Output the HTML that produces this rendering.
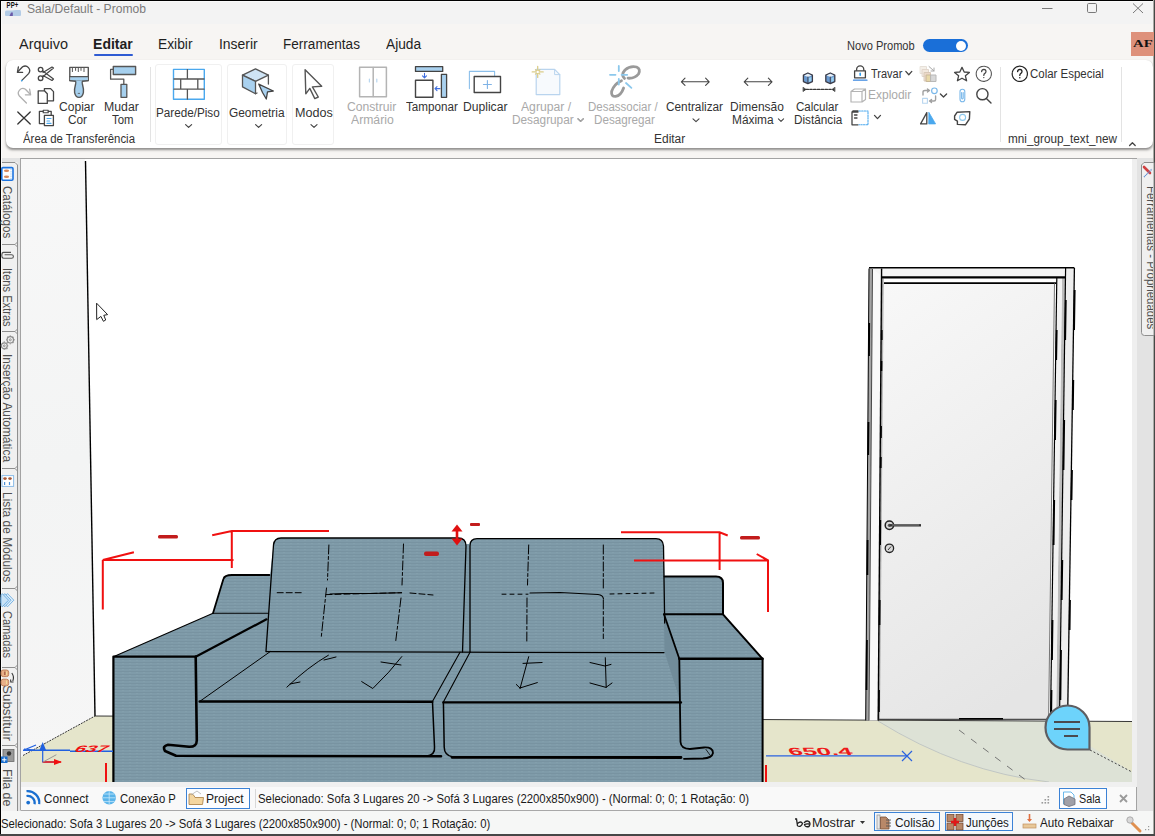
<!DOCTYPE html>
<html><head><meta charset="utf-8"><style>
html,body{margin:0;padding:0;}
body{width:1155px;height:836px;position:relative;overflow:hidden;background:#f3f3f3;font-family:"Liberation Sans",sans-serif;}
.a{position:absolute;}
.t{position:absolute;white-space:nowrap;transform-origin:0 0;}
svg{position:absolute;overflow:visible;}
</style></head><body>
<div class="a" style="left:0;top:0;width:1155px;height:24px;background:#f3f3f3"></div>
<div class="a" style="left:0;top:24px;width:1155px;height:134px;background:#f7f5f3"></div>
<div class="a" style="left:6px;top:60px;width:1146.5px;height:88px;background:#fff;border-radius:7px;box-shadow:0 2px 2.5px -0.5px rgba(0,0,0,.42), 0 0 0.8px rgba(0,0,0,.12)"></div>
<div class="a" style="left:0;top:158px;width:1155px;height:653px;background:#e3e3e3"></div>
<div class="a" style="left:20px;top:158px;width:1117px;height:652px;background:#f0f0f0;border:1px solid #a3a3a3;box-sizing:border-box"></div>
<div class="a" style="left:21px;top:787px;width:1115px;height:23px;background:#f9f9f9"></div>
<div class="a" style="left:0;top:811px;width:1155px;height:25px;background:#f6f7f6"></div>
<div class="a" style="left:0;top:0;width:1155px;height:1px;background:#000"></div>
<div class="a" style="left:0;top:1px;width:1155px;height:1px;background:#fafafa"></div>
<div class="a" style="left:0;top:0;width:1px;height:836px;background:#000"></div>
<div class="a" style="left:1153px;top:0;width:1px;height:836px;background:#aaaaa6"></div>
<div class="a" style="left:1154px;top:0;width:1px;height:836px;background:#464846"></div>
<div class="a" style="left:0;top:834px;width:1155px;height:2px;background:#474747"></div>
<!-- menu underline -->
<div class="a" style="left:94px;top:54px;width:39px;height:2px;background:#2f5bd3;border-radius:1px"></div>
<!-- toggle -->
<div class="a" style="left:923px;top:39px;width:45px;height:13px;background:#1a6fd8;border-radius:7px"></div>
<div class="a" style="left:956px;top:41px;width:10px;height:10px;background:#fff;border-radius:5px"></div>
<!-- AF -->
<div class="a" style="left:1131px;top:32px;width:23px;height:24px;background:#de917b"></div>
<!-- ribbon separators -->
<div class="a" style="left:150px;top:67px;width:1px;height:75px;background:#e3e3e3"></div>
<div class="a" style="left:1000px;top:67px;width:1px;height:75px;background:#e3e3e3"></div>
<div class="a" style="left:1121px;top:67px;width:1px;height:75px;background:#e3e3e3"></div>
<!-- ribbon boxes -->
<div class="a" style="left:155px;top:64px;width:67px;height:81px;border:1px solid #f0f0f0;border-radius:3px;box-sizing:border-box"></div>
<div class="a" style="left:227px;top:64px;width:60px;height:81px;border:1px solid #f0f0f0;border-radius:3px;box-sizing:border-box"></div>
<div class="a" style="left:292px;top:64px;width:42px;height:81px;border:1px solid #f0f0f0;border-radius:3px;box-sizing:border-box"></div>
<!-- bottom tab bar -->
<div class="a" style="left:186px;top:788px;width:64px;height:21px;border:1px solid #3b82d6;box-sizing:border-box;background:#fcfdff"></div>
<div class="a" style="left:255px;top:789px;width:1px;height:19px;background:#d8d8d8"></div>
<div class="a" style="left:1059px;top:788px;width:48px;height:21px;border:1px solid #3b82d6;box-sizing:border-box;background:#fcfdff"></div>
<div class="a" style="left:874px;top:812px;width:66px;height:19px;border:1px solid #3b82d6;box-sizing:border-box;background:#f4f8fd"></div>
<div class="a" style="left:945px;top:812px;width:68px;height:19px;border:1px solid #3b82d6;box-sizing:border-box;background:#f4f8fd"></div>
<svg style="left:0;top:0" width="1155" height="836" viewBox="0 0 1155 836">
<rect x="1" y="162" width="16.5" height="649" fill="#f0f0f0"/>
<g fill="none" stroke="#8e8e8e" stroke-width="1">
<path d="M1,162.5 L15,162.5 L17.5,165 L17.5,811"/>
<path d="M1,244.5 L15,244.5 L17.5,242 M15,244.5 L17.5,247"/>
<path d="M1,331.5 L15,331.5 L17.5,329 M15,331.5 L17.5,334"/>
<path d="M1,468.5 L15,468.5 L17.5,466 M15,468.5 L17.5,471"/>
<path d="M1,588.5 L15,588.5 L17.5,586 M15,588.5 L17.5,591"/>
<path d="M1,667.5 L15,667.5 L17.5,665 M15,667.5 L17.5,670"/>
<path d="M1,745.5 L15,745.5 L17.5,743 M15,745.5 L17.5,748"/>
</g>
<path d="M1154,162.5 L1144,162.5 L1141.5,165 L1141.5,332.5 Q1141.5,335.5 1144.5,335.5 L1154,335.5 Z" fill="#f0f0f0" stroke="#8e8e8e" stroke-width="1"/>
<rect x="1132" y="159" width="5" height="628" fill="#efefef"/>
<path d="M20.5,810.5 L1137.5,810.5" stroke="#a8a8a8" stroke-width="1"/>
</svg>
<div class="a" style="left:1px;top:1px;width:1px;height:833px;background:#fbfbfb"></div>

<svg style="left:0;top:0" width="1155" height="836" viewBox="0 0 1155 836">
<defs>
<clipPath id="vp"><rect x="21" y="159" width="1111" height="623"/></clipPath>
<linearGradient id="lw" gradientUnits="userSpaceOnUse" x1="21" y1="159" x2="120" y2="760"><stop offset="0" stop-color="#f8f8f8"/><stop offset="0.5" stop-color="#f3f4f4"/><stop offset="1" stop-color="#f6f6f6"/></linearGradient>
<linearGradient id="dr" gradientUnits="userSpaceOnUse" x1="880" y1="283" x2="1120" y2="620"><stop offset="0" stop-color="#f8f8f8"/><stop offset="1" stop-color="#e5e5e5"/></linearGradient>
<pattern id="fab" patternUnits="userSpaceOnUse" width="7" height="3"><rect width="7" height="3" fill="#7f9ba9"/><rect y="2" width="7" height="1" fill="#7893a1"/><rect x="3" y="0" width="2" height="1" fill="#839fac"/></pattern>
</defs>
<g clip-path="url(#vp)">
<rect x="21" y="159" width="1111" height="623" fill="#fff"/>
<polygon points="21,159 85,159 95,716 21,757" fill="url(#lw)"/>
<polygon points="21,757 95,716 1132,721.5 1132,782 21,782" fill="#e5e5cb"/>
<path d="M878,721 L1050,721 L1132,772 L1132,782 L1049,782 Q960,772 878,721 Z" fill="#dde2d6"/>
<path d="M878,721 Q960,772 1049,782" fill="none" stroke="#b9bfc0" stroke-width="0.8"/>
<path d="M959,730 L1027,781" fill="none" stroke="#6a6a6a" stroke-width="0.9" stroke-dasharray="7,8"/>
<path d="M1090,750 L1132,772" fill="none" stroke="#444" stroke-width="1" stroke-dasharray="2,2"/>
<!-- wall lines -->
<path d="M85.5,161 L95,716" stroke="#000" stroke-width="1.4" fill="none"/>
<path d="M95,716 L1132,721.5" stroke="#222" stroke-width="0.9" fill="none"/>
<path d="M23,755.5 L95,716" stroke="#333" stroke-width="1" stroke-dasharray="2,1" fill="none"/>
<!-- door -->
<polygon points="884,283 1055,283 1048.6,719 879,719" fill="url(#dr)"/>
<polygon points="869,268.5 872.5,268.5 869,720.4 865.7,720.4" fill="#a4a4a4"/>
<polygon points="872.5,268.5 881.3,268.5 878,720.4 869,720.4" fill="#f9f9f9"/>
<polygon points="881.3,276 1065.6,276 1065.6,268.5 872.5,268.5" fill="#f4f4f4"/>
<polygon points="1065.6,268.5 1074.4,268.5 1067.6,720.4 1059.5,720.4" fill="#eeeeee"/>
<polygon points="1062,278 1065.2,278 1059,720 1056,720" fill="#bcbcbc"/>
<polygon points="1057,278 1062,278 1056,720 1050.5,720" fill="#f2f2f2"/>
<polygon points="881.5,278.5 883.8,278.5 880,719 878,719" fill="#b0b0b0"/>
<g fill="none" stroke="#000">
<path d="M869,267.8 L1074.4,267.8" stroke-width="1.6"/>
<path d="M869,268.5 L865.7,720.4" stroke-width="1"/>
<path d="M872.5,269 L869,720.4" stroke-width="0.9" stroke="#333"/>
<path d="M881.6,268.5 L878.2,720.4" stroke-width="1.4"/>
<path d="M881.5,277.4 L1065.6,277.4" stroke-width="2.4"/>
<path d="M884,283.2 L1056.5,283.2" stroke-width="1.8"/>
<path d="M1074.4,268 L1067.6,720.4" stroke-width="1.3"/>
<path d="M1065.6,268 L1059.5,720.4" stroke-width="1.2"/>
<path d="M1056.8,277.5 L1050.5,720.4" stroke-width="1.2"/>
<path d="M1054.5,283 L1048.6,719" stroke-width="0.8" stroke="#555"/>
<path d="M879,719.3 L1050,719.3" stroke-width="1" stroke="#222"/>
<path d="M959,718.8 L1003,718.8" stroke-width="1.5"/>
<path d="M869.2,323 L869.0,356 M868.5,422 L868.2,455 M867.6,540 L867.4,575 M866.9,640 L866.5,690 M881.7,330 L881.7,340 M881.5,361 L881.4,371 M881.0,426 L880.9,438 M880.8,457 L880.7,468 M880.3,520 L880.1,545 M879.7,600 L879.5,625 M879.0,690 L878.9,712 M1065.8,300 L1065.2,340 M1064.2,420 L1063.5,470 M1062.3,560 L1061.7,600 M1061.0,650 L1060.4,700 M1056.7,330 L1056.2,360 M1055.7,400 L1055.1,440 M1054.2,500 L1053.6,545 M1052.5,620 L1052.0,660 M1051.5,690 L1051.2,715 M1074.7,290 L1074.1,330 M1073.3,380 L1072.9,410 M1072.0,470 L1071.5,500 M1070.0,600 L1069.6,630" stroke-width="1.8"/>
</g>
<circle cx="889.4" cy="525.3" r="4.2" fill="#d8d8d8" stroke="#222" stroke-width="1.5"/>
<circle cx="889.4" cy="525.3" r="1.6" fill="#555"/>
<path d="M889.5,525.3 L921,525.3" stroke="#333" stroke-width="2.4"/>
<path d="M892,525 L919,525" stroke="#aaa" stroke-width="0.7"/>
<circle cx="889.4" cy="548.3" r="4.2" fill="#d8d8d8" stroke="#222" stroke-width="1.3"/>
<path d="M888,550 L891,546.5" stroke="#333" stroke-width="1"/>
<!-- sofa body -->
<path d="M113.4,782 L113.4,656.7 L213,613.2 L223.4,579 Q224.5,575 232,575 L270,575 L273.5,545 Q274.3,538 281,538 L458,538 Q465,538 466,544 L469,544 Q470,538.7 477,538.7 L656,538.7 Q663,538.7 663.5,546 L664.5,576.5 L716,576.5 Q723,576.5 723,583 L723,614.3 L762.6,658.8 L762.6,782 Z" fill="url(#fab)"/>
<polygon points="664,614.3 679.3,658.8 680.5,702 664.5,652" fill="#718c9a"/>
<g fill="none" stroke="#000" stroke-linecap="round" stroke-linejoin="round">
<path d="M113.4,782 L113.4,656.7 L195.7,656.7" stroke-width="2.2"/>
<path d="M195.7,656.7 L196.8,740 Q197,747 189,746.7 L168,744.7 Q162,746 165,751 L176,755.8 L441,756.3" stroke-width="2.6"/>
<path d="M113.4,656.7 L213,613.2 L268,613.2" stroke-width="1.1"/>
<path d="M195.7,656.7 L266.5,619.3" stroke-width="2.2"/>
<path d="M213,613.2 L223.4,579 Q224.5,575 232,575 L269.4,575" stroke-width="1.8"/>
<path d="M266,651 L273.5,545 Q274.3,538 281,538 L458,538 Q466,538 466,546 L462.5,652" stroke-width="1.3"/>
<path d="M266,651.6 L460,652.2 L664,652.6" stroke-width="1.2"/>
<path d="M470,652 L470,546 Q470,538.7 477,538.7 L656,538.7 Q663,538.7 663.5,546 L664.7,623" stroke-width="1.3"/>
<path d="M664.5,576.5 L716,576.5 Q723,576.5 723,583 L723,614.3" stroke-width="2"/>
<path d="M664,614.3 L723,614.3 L762.6,658.8 L762.6,782" stroke-width="2"/>
<path d="M679.3,658.8 L762.6,658.8" stroke-width="2.4"/>
<path d="M664,614.3 L679.3,658.8 L680.5,742 Q681,749 690,749 L704,747.5 Q713,747 713,753 Q712,758 703,758.5 L684,758.8" stroke-width="1.8"/>
<path d="M706,749.5 L710,755" stroke-width="0.8"/>
<path d="M199.6,701.5 L432.3,701.8" stroke-width="2.4"/>
<path d="M199.6,701.5 L270.2,651.6" stroke-width="1"/>
<path d="M432.3,701.8 L460,652.2 M443.4,702 L470,652.2" stroke-width="1.1"/>
<path d="M432.5,702 L434.5,747 Q435.5,755 426,756.3 M443.4,702 L444.2,747 Q444.2,755.5 453,757" stroke-width="1.5"/>
<path d="M443.4,702.4 L681,702.4" stroke-width="2.4"/>
<path d="M452,757.3 L681,757.5" stroke-width="2.8"/>
<!-- tufting -->
<path d="M328.9,545 L327.5,580 M326.5,588 L321.2,637.7 M403.5,544 L402,585 M401,598 L395.8,640.5" stroke-width="1" stroke-dasharray="9,2.5,3,2.5"/>
<path d="M277.2,592.7 L304,592.7 M326,594.6 L401.6,592.7 M410,593 L433,595" stroke-width="1" stroke-dasharray="6,3"/>
<path d="M330,594 L345,593.5 L370,593.5 L401.6,592.7" stroke-width="1.1"/>
<path d="M528.7,545 L527.5,585 M527,598 L526.8,641.4 M603.3,545 L603.3,590 M603.3,600 L603.3,638.6" stroke-width="1" stroke-dasharray="9,2.5,3,2.5"/>
<path d="M502,594.2 L528,594.2 M610,594 L655,593" stroke-width="1" stroke-dasharray="4,4"/>
<path d="M530,593 L560,592.5 L598,594.5 Q603,595 603.5,599" stroke-width="1.1"/>
<path d="M286.9,687.1 Q308,667 328.4,655.2 M324,660 L336,657 M290,684 L300,682 M361.7,681.6 L372.8,688.5 Q390,672 401.8,656.6 M381,662 L401,665" stroke-width="1"/>
<path d="M528.7,656.7 L520.1,688.3 M523,663.4 L542.1,662.5 M520,688 L537.3,682.6 M516.3,684.5 L520,688 M605.3,657.7 L606.2,687.4 M590,662.5 L605,666 L611,664.4 M590,683 L606,687.4 L612,683" stroke-width="1"/>
</g>
<!-- red dimension lines -->
<g fill="none" stroke="#f01010" stroke-width="2">
<path d="M212.2,535.3 L231.8,531 L329,531 M231.8,531 L231.8,568"/>
<path d="M133.9,552.2 L102.8,560 L233.5,560 M102.8,560 L102.8,609.6"/>
<path d="M621,532.3 L719.6,532.3 L727.7,535.5 M719.6,532.3 L719.6,570"/>
<path d="M634,560.4 L768,560.4 M756.7,554 L768,560.4 L768,612"/>
<path d="M106,763 L106,782 M766,765 L766,782"/>
</g>
<g fill="#c21c1c">
<rect x="158" y="535" width="20" height="3.5" rx="1.5"/>
<rect x="740" y="536" width="20" height="3.5" rx="1.5"/>
<rect x="424" y="551.5" width="15" height="4.5" rx="2"/>
<rect x="470" y="523" width="10" height="3" rx="1"/>
</g>
<path d="M457,529 L457,541" stroke="#e01010" stroke-width="2.6" fill="none"/><polygon points="451.5,531.5 457,524.5 462.5,531.5" fill="#e01010"/><polygon points="451.5,538.5 457,545.5 462.5,538.5" fill="#e01010"/>
<!-- blue dims -->
<path d="M23,750.3 L70,750.3 M70,751.3 L113,751.3" stroke="#2060e0" stroke-width="1.4"/>
<path d="M766,755.8 L907,755.8" stroke="#2a62e0" stroke-width="1.2"/>
<path d="M902,751 L912,761 M902,761 L912,751" stroke="#2a62e0" stroke-width="1.2"/>
<path d="M42.7,746 L42.7,762 L56,762" stroke="#2060e0" stroke-width="1.2" fill="none"/>
<path d="M42.7,762 L61,762" stroke="#f01010" stroke-width="1.5"/>
<polygon points="39.5,750 42.7,742 46,750" fill="#2060e0"/>
<polygon points="54,759 62,762 54,765" fill="#f01010"/>
<path d="M43,762 L56.4,754.7" stroke="#999" stroke-width="1"/>
<path d="M24,750 L36,745 M24,749 L34,750" stroke="#2060e0" stroke-width="1.2"/>
<text x="0" y="0" font-family="Liberation Sans" font-weight="700" font-size="10" fill="#f01010" transform="translate(73,751.5) skewX(-40) scale(1.95,0.95)">637</text>
<text x="0" y="0" font-family="Liberation Sans" font-weight="700" font-size="10" fill="#ee1a1a" transform="translate(790,755.2) skewX(25) scale(2.55,1.05)">650.4</text>
<!-- chat bubble -->
<path d="M1089.5,749.5 L1089.5,727.5 A22,22 0 1 0 1067.5,749.5 Z" fill="#6dd3fb" stroke="#5e5e62" stroke-width="2.2"/>
<path d="M1054,722 L1080,722 M1054,729 L1080,729 M1064,736 L1078,736" stroke="#4a4a4e" stroke-width="1.8"/>
</g>
</svg>

<svg style="left:0;top:0" width="1155" height="836" viewBox="0 0 1155 836">
<g fill="none" stroke-linecap="round" stroke-linejoin="round">
<!-- undo -->
<path d="M21.6,80.6 L28.6,73.6 A4.6,4.6 0 0 0 22.6,66.8 L17.8,71.8" stroke="#454545" stroke-width="1.3"/>
<path d="M18.4,66.8 L17.4,72.4 L22.6,72.4" stroke="#454545" stroke-width="1.3"/>
<circle cx="21.8" cy="80.6" r="0.9" fill="#4aa8ee" stroke="none"/>
<!-- redo -->
<path d="M26.4,103 L19.4,96 A4.6,4.6 0 0 1 25.4,89.2 L30.2,94.2" stroke="#b0b0b0" stroke-width="1.3"/>
<path d="M29.6,89.2 L30.6,94.8 L25.4,94.8" stroke="#b0b0b0" stroke-width="1.3"/>
<!-- scissors -->
<circle cx="40.6" cy="69.6" r="2.3" stroke="#454545" stroke-width="1.3"/>
<circle cx="40.6" cy="78.2" r="2.3" stroke="#454545" stroke-width="1.3"/>
<path d="M42.5,70.8 L53.5,79 L52,80.5 L43,75.5 M42.5,77 L53.5,68 L52,67 L43,72.5" stroke="#454545" stroke-width="1.2"/>
<!-- copy -->
<path d="M44.4,91 L44.4,88.6 L50.6,88.6 L53.5,91.6 L53.5,100.8 L47.4,100.8" stroke="#454545" stroke-width="1.3"/>
<path d="M38.2,103.4 L38.2,90.8 L44.4,90.8 L47.3,93.8 L47.3,103.4 Z" stroke="#454545" stroke-width="1.3" fill="#fff"/>
<!-- X -->
<path d="M17.8,112 L30.2,124 M30.2,112 L17.8,124" stroke="#333" stroke-width="1.3"/>
<!-- paste -->
<path d="M43,111.4 L39.4,111.4 L39.4,123.6 L44.4,123.6 M48.4,111.4 L51.2,111.4 L51.2,115.2" stroke="#454545" stroke-width="1.3"/>
<rect x="43.2" y="110.2" width="5" height="2.6" stroke="#454545" stroke-width="1.1"/>
<rect x="44.4" y="115.4" width="9" height="10.2" stroke="#454545" stroke-width="1.3" fill="#fff"/>
<path d="M47,118.5 L51,118.5 M47,121 L49.5,121 M47,123.4 L51,123.4" stroke="#4aa8ee" stroke-width="1.2"/>
<!-- brush -->
<path d="M69.8,80.6 L69.8,67.4 L88.3,67.4 L88.3,80.6 Z" stroke="#555" stroke-width="1.4" fill="#fff"/>
<path d="M70.4,76.8 L87.7,76.8 L87.7,80.4 L70.4,80.4 Z" fill="#a6d0ee" stroke="none"/>
<path d="M69.8,76.6 L88.3,76.6" stroke="#555" stroke-width="1.2"/>
<path d="M72.4,68 L72.4,71.6 M75.6,68 L75.6,70.4 M78.3,68 L78.3,71.6 M81,68 L81,70.4 M84,68 L84,71.6" stroke="#555" stroke-width="1"/>
<path d="M69.8,80.6 L75.4,81.2 Q76.2,81.6 75.6,84 Q74.2,89 74.6,92.6 Q75.6,97.4 79,97.4 Q82.4,97.4 83.4,92.6 Q83.8,89 82.4,84 Q81.8,81.6 82.6,81.2 L88.3,80.6" stroke="#555" stroke-width="1.4" fill="#a6d0ee"/>
<path d="M78.2,93.4 L79.6,93.4" stroke="#555" stroke-width="0.8"/>
<!-- roller -->
<rect x="113.3" y="66.5" width="22.3" height="8" stroke="#555" stroke-width="1.4" fill="#a6d0ee"/>
<path d="M113.3,69.4 L110.6,69.4 L110.6,79.2 L123.8,79.2 L123.8,84.3" stroke="#555" stroke-width="1.3"/>
<rect x="121" y="84.3" width="5.8" height="13" stroke="#555" stroke-width="1.3" fill="#a6d0ee"/>
<!-- brick -->
<rect x="173.5" y="69.4" width="30.8" height="29.8" stroke="#4aa8ee" stroke-width="1.4" fill="#fff"/>
<path d="M174,79 L204,79 M174,89.2 L204,89.2 M187.4,69.6 L187.4,79 M180.7,79 L180.7,89.2 M197.8,79 L197.8,89.2 M187.4,89.2 L187.4,99" stroke="#555" stroke-width="1.3"/>
<!-- cube -->
<path d="M255.5,68.8 L268.4,75.1 L255.5,81.3 L242.5,75.1 Z" fill="#cfe4f5" stroke="#555" stroke-width="1.3"/>
<path d="M242.5,75.1 L242.5,86.9 L255.5,93.8 L255.5,81.3 Z" fill="#a9d1ef" stroke="#555" stroke-width="1.3"/>
<path d="M268.4,75.1 L268.4,84 M255.5,93.8 L257,93" stroke="#555" stroke-width="1.3"/>
<path d="M258.7,84.1 L273.3,91 L267.5,91.8 L266.3,99 L262.5,92.5 Z" fill="#a9d1ef" stroke="#444" stroke-width="1.3"/>
<!-- modos arrow -->
<path d="M305.1,69.8 L321.7,86.2 L312.4,86.9 L318.3,97 L314.8,98.6 L309.8,88.4 L305.8,93.8 Z" stroke="#555" stroke-width="1.4" fill="#fff"/>
<!-- chevrons -->
<path d="M185.6,124.6 L188.6,127.4 L191.6,124.6 M255.6,124.6 L258.6,127.4 L261.6,124.6 M311,124.6 L314,127.4 L317,124.6" stroke="#444" stroke-width="1.2"/>
<path d="M693,118.8 L696,121.6 L699,118.8 M778.4,118.8 L781,121.4 L783.6,118.8 M578,118.8 L580.6,121.4 L583.2,118.8" stroke="#444" stroke-width="1.1"/>
<path d="M578,118.8 L580.6,121.4 L583.2,118.8" stroke="#aaa" stroke-width="1.1"/>
<!-- construir -->
<rect x="359.6" y="67.3" width="26.8" height="29.4" stroke="#b4b4b4" stroke-width="1.5" fill="#fff"/>
<path d="M373.2,67.5 L373.2,96.5" stroke="#b4b4b4" stroke-width="1.5"/>
<path d="M369.4,79 L369.4,82 M376.8,79 L376.8,82" stroke="#b8d6f0" stroke-width="1.2"/>
<!-- tamponar -->
<rect x="415.5" y="66.6" width="27.2" height="4.8" stroke="#444" stroke-width="1.3" fill="#a9d1ef"/>
<rect x="415.5" y="80.3" width="17.4" height="17" stroke="#444" stroke-width="1.4" fill="#fff"/>
<rect x="441.4" y="74.4" width="5.2" height="22.9" stroke="#444" stroke-width="1.3" fill="#a9d1ef"/>
<path d="M424.5,73.4 L424.5,77.6 M422.5,75.8 L424.5,77.8 L426.5,75.8 M440,88.6 L435,88.6 M437,86.6 L435,88.6 L437,90.6" stroke="#3e6ee0" stroke-width="1.1"/>
<!-- duplicar -->
<path d="M469.4,88.6 L469.4,71.4 L494.6,71.4 L494.6,76.4" stroke="#8cbfea" stroke-width="1.1"/>
<rect x="474.2" y="76.5" width="26.3" height="16" stroke="#444" stroke-width="1.4" fill="#fff"/>
<path d="M483.4,84.5 L491.4,84.5 M487.4,80.5 L487.4,88.5" stroke="#7fb3e6" stroke-width="1.1"/>
<!-- agrupar -->
<path d="M536.2,69.4 L554.6,69.4 L559.8,74.6 L559.8,94.6 L536.2,94.6 Z" stroke="#b9d4ee" stroke-width="1.2" fill="#f7fafd"/>
<path d="M554.6,69.4 L554.6,74.6 L559.8,74.6" stroke="#b9d4ee" stroke-width="1"/>
<path d="M537.7,66.4 L537.7,77.4 M532.2,71.9 L543.2,71.9 M535.5,69.7 L539.9,74.1 M539.9,69.7 L535.5,74.1" stroke="#dccd8a" stroke-width="1.3"/>
<circle cx="537.7" cy="71.9" r="1.2" fill="#fff" stroke="none"/>
<!-- desassociar -->
<path d="M624.5,78.4 Q620.5,75 625,70 Q630,65.5 636.5,67 Q641,69 638.5,74 Q635,78.6 628,78.2" stroke="#9a9a9a" stroke-width="2.8"/>
<path d="M621.5,80.8 Q614,84 611.6,91.5 Q611,96.6 615.6,96.4 Q621,95.6 623.6,88" stroke="#9a9a9a" stroke-width="2.8"/>
<path d="M618.8,66 L618.8,71 M618.8,79 L618.8,84.5 M610,74.8 L615.5,74.8 M621.6,74.8 L627.2,74.8 M626,83 L631.4,87.8" stroke="#8cc8ec" stroke-width="1.8"/>
<!-- centralizar / dimensao arrows -->
<path d="M681.6,81.8 L709,81.8 M685,78.2 L681.4,81.8 L685,85.4 M705.6,78.2 L709.2,81.8 L705.6,85.4" stroke="#444" stroke-width="1.1"/>
<path d="M744.4,81.8 L771.8,81.8 M747.8,78.2 L744.2,81.8 L747.8,85.4 M768.4,78.2 L772,81.8 L768.4,85.4" stroke="#444" stroke-width="1.1"/>
<!-- calcular -->
<path d="M803.4,75.2 L807.9,73 L812.4,75.2 L812.4,81.6 L807.9,83.6 L803.4,81.6 Z" fill="#6a9ad0" stroke="#3c3c48" stroke-width="1.3"/><path d="M804.1999999999999,75.4 L807.9,73.8 L811.6,75.4 L807.9,77 Z" fill="#e8f0f8" stroke="none"/><path d="M807.9,77 L807.9,83" stroke="#3c3c48" stroke-width="0.9"/><path d="M808.9,78 L811.4,77 L811.4,81 L808.9,82 Z" fill="#9ad0f0" stroke="none"/><path d="M825.8,75.2 L830.3,73 L834.8,75.2 L834.8,81.6 L830.3,83.6 L825.8,81.6 Z" fill="#6a9ad0" stroke="#3c3c48" stroke-width="1.3"/><path d="M826.5999999999999,75.4 L830.3,73.8 L834.0,75.4 L830.3,77 Z" fill="#e8f0f8" stroke="none"/><path d="M830.3,77 L830.3,83" stroke="#3c3c48" stroke-width="0.9"/><path d="M831.3,78 L833.8,77 L833.8,81 L831.3,82 Z" fill="#9ad0f0" stroke="none"/>
<path d="M806,89.4 L832,89.4" stroke="#3a3a3a" stroke-width="1.3" stroke-dasharray="2.4,1.4"/>
<path d="M803.3,87.4 L806,89.4 L803.3,91.4 Z M834.7,87.4 L832,89.4 L834.7,91.4 Z" fill="#333" stroke="#333" stroke-width="0.6"/>
<!-- lock -->
<path d="M856.6,70.6 L856.6,69.4 A3.6,3.6 0 0 1 863.8,69.4 L863.8,70.6" stroke="#444" stroke-width="1.3"/>
<rect x="854.6" y="70.8" width="10.8" height="7" stroke="#444" stroke-width="1.3" fill="#fff"/>
<path d="M860.2,73.4 L860.2,75.2" stroke="#2a9df0" stroke-width="1.6"/>
<path d="M853.5,80.2 L867,80.2" stroke="#3a86e0" stroke-width="1.2"/>
<!-- explodir -->
<path d="M851,91.5 L854.5,89 L865.5,89 L865.5,99.5 L862,102 L851,102 Z M851,91.5 L862,91.5 L862,102 M862,91.5 L865.5,89" stroke="#b4b4b4" stroke-width="1.2" fill="#fff"/>
<!-- row3 icon -->
<path d="M858,111 L853,111 L852,112 L852,124.8 L858,124.8 M852.5,112 L858,112 M854.5,115 L857,115 M854.5,118 L857,118" stroke="#444" stroke-width="1.3"/>
<path d="M859,111 L868,111 L868,124.8 L859,124.8" stroke="#4aa8ee" stroke-width="1.1" stroke-dasharray="1.4,1.2"/>
<path d="M874.5,115.4 L877.5,118.6 L880.5,115.4 M905.8,71.4 L908.8,74.8 L911.8,71.4 M940.4,94 L943.5,97 L946.6,94" stroke="#444" stroke-width="1.3"/>
<!-- faded col2 icon -->
<rect x="920.5" y="66.5" width="6" height="7" stroke="#e6e0d8" stroke-width="1" fill="#f4efe8"/>
<rect x="922.5" y="69.5" width="6" height="7" stroke="#e2d6cc" stroke-width="1" fill="#f2e8de"/>
<rect x="924.5" y="72.5" width="6" height="8.5" stroke="#d8c8b8" stroke-width="1" fill="#ecd8c8"/>
<rect x="926.5" y="75" width="4.5" height="6.5" stroke="#c8b898" stroke-width="1" fill="#e8d8a8"/>
<rect x="931" y="75" width="5" height="6.5" stroke="#b8b8b8" stroke-width="1" fill="#d8d8d8"/>
<path d="M929,66.5 L934,71 M934,68 L934,71 L931,71" stroke="#a8a8a8" stroke-width="1"/>
<!-- swap -->
<path d="M923,95 L923,92 Q923,90.5 925,90.5 L929,90.5 M927.5,89 L929.5,90.5 L927.5,92" stroke="#a0a0a0" stroke-width="1.4"/>
<circle cx="934.4" cy="90.8" r="2.8" stroke="#7ab8ea" stroke-width="1.2"/>
<rect x="922.6" y="98.4" width="4.8" height="4.8" stroke="#b8d6f0" stroke-width="1.1"/>
<path d="M935.6,96 L935.6,99.5 Q935.6,101 934,101 L930,101 M931.5,99.5 L929.5,101 L931.5,102.5" stroke="#a0a0a0" stroke-width="1.4"/>
<!-- mirror -->
<path d="M926.8,112.6 L926.8,123.9 L920.6,123.9 Z" stroke="#444" stroke-width="1.3"/>
<path d="M929,112.6 L935.6,123.9 L929,123.9 Z" fill="#4aa8ee" stroke="#4aa8ee" stroke-width="0.8"/>
<!-- star -->
<path d="M962,67.4 L964.2,72 L969.4,72.4 L965.4,75.8 L966.6,80.8 L962,78.2 L957.4,80.8 L958.6,75.8 L954.6,72.4 L959.8,72 Z" stroke="#444" stroke-width="1.3"/>
<!-- help circle -->
<circle cx="983.8" cy="73.8" r="7.6" stroke="#555" stroke-width="1.1" stroke-dasharray="2.2,0.8"/>
<path d="M981.6,71.6 Q981.8,69.4 983.9,69.4 Q986,69.6 986,71.6 Q986,73 984.6,73.6 Q983.8,74 983.8,75.4" stroke="#444" stroke-width="1.2"/>
<circle cx="983.8" cy="77.6" r="0.7" fill="#444" stroke="none"/>
<!-- paperclip -->
<path d="M960,91.5 Q960,89.2 962.4,89.2 Q964.8,89.2 964.8,91.5 L964.8,99 Q964.8,101.8 962.4,101.8 Q960,101.8 960,99 Z M961.6,92.6 L961.6,98.2 Q962.4,99.6 963.2,98.2 L963.2,92.6" stroke="#7ab8ea" stroke-width="1.1"/>
<!-- magnifier -->
<circle cx="982.4" cy="94.2" r="5.6" stroke="#444" stroke-width="1.4"/>
<path d="M986.4,98.4 L991,103" stroke="#444" stroke-width="1.4"/>
<!-- shape -->
<path d="M957.2,112.2 L969.8,111.6 L969.4,119 L965.4,124.8 L957.4,124.4 L957.4,121.2 L954.6,119.4 L954.6,116 Z" stroke="#444" stroke-width="1.4"/>
<circle cx="962.6" cy="117.4" r="3" stroke="#8cc8ec" stroke-width="1.1"/>
<!-- colar especial -->
<circle cx="1019.8" cy="73.8" r="7.6" stroke="#222" stroke-width="1.2" stroke-dasharray="2.4,0.8"/>
<path d="M1017.6,71.6 Q1017.8,69.4 1019.9,69.4 Q1022,69.6 1022,71.6 Q1022,73 1020.6,73.6 Q1019.8,74 1019.8,75.4" stroke="#222" stroke-width="1.3"/>
<circle cx="1019.8" cy="77.8" r="0.8" fill="#222" stroke="none"/>
<path d="M1129.6,145.5 L1132.4,142.8 L1135.2,145.5" stroke="#444" stroke-width="1.3"/>
</g>
</svg>

<div class="t" style="left:26.50px;top:3.34px;font-size:12px;line-height:12px;color:#7b7b7b;font-weight:400;font-family:'Liberation Sans',sans-serif;transform:scaleX(1.0077);">Sala/Default - Promob</div><div class="t" style="left:19.00px;top:36.95px;font-size:14px;line-height:14px;color:#1f1f1f;font-weight:400;font-family:'Liberation Sans',sans-serif;transform:scaleX(1.0320);">Arquivo</div><div class="t" style="left:93.10px;top:36.95px;font-size:14px;line-height:14px;color:#1f1f1f;font-weight:700;font-family:'Liberation Sans',sans-serif;transform:scaleX(1.0000);">Editar</div><div class="t" style="left:158.12px;top:36.95px;font-size:14px;line-height:14px;color:#1f1f1f;font-weight:400;font-family:'Liberation Sans',sans-serif;transform:scaleX(0.9852);">Exibir</div><div class="t" style="left:218.61px;top:36.95px;font-size:14px;line-height:14px;color:#1f1f1f;font-weight:400;font-family:'Liberation Sans',sans-serif;transform:scaleX(0.9947);">Inserir</div><div class="t" style="left:282.73px;top:36.95px;font-size:14px;line-height:14px;color:#1f1f1f;font-weight:400;font-family:'Liberation Sans',sans-serif;transform:scaleX(0.9692);">Ferramentas</div><div class="t" style="left:385.90px;top:36.95px;font-size:14px;line-height:14px;color:#1f1f1f;font-weight:400;font-family:'Liberation Sans',sans-serif;transform:scaleX(0.9804);">Ajuda</div><div class="t" style="left:846.57px;top:40.44px;font-size:12px;line-height:12px;color:#333;font-weight:400;font-family:'Liberation Sans',sans-serif;transform:scaleX(0.9222);">Novo Promob</div><div class="t" style="left:59.40px;top:101.04px;font-size:12px;line-height:12px;color:#333;font-weight:400;font-family:'Liberation Sans',sans-serif;transform:scaleX(1.0058);">Copiar</div><div class="t" style="left:68.21px;top:114.24px;font-size:12px;line-height:12px;color:#333;font-weight:400;font-family:'Liberation Sans',sans-serif;transform:scaleX(0.9838);">Cor</div><div class="t" style="left:104.08px;top:101.04px;font-size:12px;line-height:12px;color:#333;font-weight:400;font-family:'Liberation Sans',sans-serif;transform:scaleX(1.0243);">Mudar</div><div class="t" style="left:111.81px;top:114.24px;font-size:12px;line-height:12px;color:#333;font-weight:400;font-family:'Liberation Sans',sans-serif;transform:scaleX(0.9495);">Tom</div><div class="t" style="left:23.00px;top:133.14px;font-size:12px;line-height:12px;color:#333;font-weight:400;font-family:'Liberation Sans',sans-serif;transform:scaleX(0.9483);">Área de Transferência</div><div class="t" style="left:156.42px;top:107.14px;font-size:12px;line-height:12px;color:#333;font-weight:400;font-family:'Liberation Sans',sans-serif;transform:scaleX(0.9734);">Parede/Piso</div><div class="t" style="left:229.11px;top:107.14px;font-size:12px;line-height:12px;color:#333;font-weight:400;font-family:'Liberation Sans',sans-serif;transform:scaleX(0.9910);">Geometria</div><div class="t" style="left:294.56px;top:107.14px;font-size:12px;line-height:12px;color:#333;font-weight:400;font-family:'Liberation Sans',sans-serif;transform:scaleX(1.0490);">Modos</div><div class="t" style="left:346.69px;top:101.24px;font-size:12px;line-height:12px;color:#a9a9a9;font-weight:400;font-family:'Liberation Sans',sans-serif;transform:scaleX(1.0125);">Construir</div><div class="t" style="left:351.00px;top:113.84px;font-size:12px;line-height:12px;color:#a9a9a9;font-weight:400;font-family:'Liberation Sans',sans-serif;transform:scaleX(1.0169);">Armário</div><div class="t" style="left:405.61px;top:101.24px;font-size:12px;line-height:12px;color:#333;font-weight:400;font-family:'Liberation Sans',sans-serif;transform:scaleX(0.9717);">Tamponar</div><div class="t" style="left:463.29px;top:101.24px;font-size:12px;line-height:12px;color:#333;font-weight:400;font-family:'Liberation Sans',sans-serif;transform:scaleX(1.0093);">Duplicar</div><div class="t" style="left:521.00px;top:101.24px;font-size:12px;line-height:12px;color:#a9a9a9;font-weight:400;font-family:'Liberation Sans',sans-serif;transform:scaleX(1.0142);">Agrupar /</div><div class="t" style="left:511.91px;top:113.84px;font-size:12px;line-height:12px;color:#a9a9a9;font-weight:400;font-family:'Liberation Sans',sans-serif;transform:scaleX(0.9838);">Desagrupar</div><div class="t" style="left:588.44px;top:101.24px;font-size:12px;line-height:12px;color:#a9a9a9;font-weight:400;font-family:'Liberation Sans',sans-serif;transform:scaleX(0.9583);">Desassociar /</div><div class="t" style="left:593.63px;top:113.84px;font-size:12px;line-height:12px;color:#a9a9a9;font-weight:400;font-family:'Liberation Sans',sans-serif;transform:scaleX(0.9708);">Desagregar</div><div class="t" style="left:666.41px;top:101.24px;font-size:12px;line-height:12px;color:#333;font-weight:400;font-family:'Liberation Sans',sans-serif;transform:scaleX(0.9825);">Centralizar</div><div class="t" style="left:729.70px;top:101.24px;font-size:12px;line-height:12px;color:#333;font-weight:400;font-family:'Liberation Sans',sans-serif;transform:scaleX(0.9962);">Dimensão</div><div class="t" style="left:731.81px;top:113.84px;font-size:12px;line-height:12px;color:#333;font-weight:400;font-family:'Liberation Sans',sans-serif;transform:scaleX(0.9903);">Máxima</div><div class="t" style="left:796.22px;top:101.24px;font-size:12px;line-height:12px;color:#333;font-weight:400;font-family:'Liberation Sans',sans-serif;transform:scaleX(0.9630);">Calcular</div><div class="t" style="left:793.82px;top:113.84px;font-size:12px;line-height:12px;color:#333;font-weight:400;font-family:'Liberation Sans',sans-serif;transform:scaleX(0.9794);">Distância</div><div class="t" style="left:653.90px;top:133.44px;font-size:12px;line-height:12px;color:#333;font-weight:400;font-family:'Liberation Sans',sans-serif;transform:scaleX(0.9967);">Editar</div><div class="t" style="left:870.52px;top:67.54px;font-size:12px;line-height:12px;color:#333;font-weight:400;font-family:'Liberation Sans',sans-serif;transform:scaleX(0.9142);">Travar</div><div class="t" style="left:867.90px;top:89.44px;font-size:12px;line-height:12px;color:#a9a9a9;font-weight:400;font-family:'Liberation Sans',sans-serif;transform:scaleX(0.9976);">Explodir</div><div class="t" style="left:1029.73px;top:67.74px;font-size:12px;line-height:12px;color:#333;font-weight:400;font-family:'Liberation Sans',sans-serif;transform:scaleX(0.9553);">Colar Especial</div><div class="t" style="left:1007.92px;top:133.04px;font-size:12px;line-height:12px;color:#333;font-weight:400;font-family:'Liberation Sans',sans-serif;transform:scaleX(0.9783);">mni_group_text_new</div><div class="t" style="left:43.80px;top:793.14px;font-size:12px;line-height:12px;color:#1a1a1a;font-weight:400;font-family:'Liberation Sans',sans-serif;transform:scaleX(1.0000);">Connect</div><div class="t" style="left:119.94px;top:793.14px;font-size:12px;line-height:12px;color:#1a1a1a;font-weight:400;font-family:'Liberation Sans',sans-serif;transform:scaleX(0.9399);">Conexão P</div><div class="t" style="left:206.29px;top:793.14px;font-size:12px;line-height:12px;color:#1a1a1a;font-weight:400;font-family:'Liberation Sans',sans-serif;transform:scaleX(1.0082);">Project</div><div class="t" style="left:258.43px;top:793.14px;font-size:12px;line-height:12px;color:#1a1a1a;font-weight:400;font-family:'Liberation Sans',sans-serif;transform:scaleX(0.9467);">Selecionado: Sofa 3 Lugares 20 -&gt; Sofá 3 Lugares (2200x850x900) - (Normal: 0; 0; 1 Rotação: 0)</div><div class="t" style="left:1079.15px;top:793.14px;font-size:12px;line-height:12px;color:#1a1a1a;font-weight:400;font-family:'Liberation Sans',sans-serif;transform:scaleX(0.8979);">Sala</div><div class="t" style="left:1.36px;top:817.40px;font-size:13px;line-height:13px;color:#1a1a1a;font-weight:400;font-family:'Liberation Sans',sans-serif;transform:scaleX(0.8707);">Selecionado: Sofa 3 Lugares 20 -&gt; Sofá 3 Lugares (2200x850x900) - (Normal: 0; 0; 1 Rotação: 0)</div><div class="t" style="left:811.95px;top:816.64px;font-size:12px;line-height:12px;color:#1a1a1a;font-weight:400;font-family:'Liberation Sans',sans-serif;transform:scaleX(1.0556);">Mostrar</div><div class="t" style="left:894.91px;top:816.64px;font-size:12px;line-height:12px;color:#1a1a1a;font-weight:400;font-family:'Liberation Sans',sans-serif;transform:scaleX(0.9897);">Colisão</div><div class="t" style="left:966.10px;top:816.64px;font-size:12px;line-height:12px;color:#1a1a1a;font-weight:400;font-family:'Liberation Sans',sans-serif;transform:scaleX(0.9570);">Junções</div><div class="t" style="left:1039.70px;top:816.64px;font-size:12px;line-height:12px;color:#1a1a1a;font-weight:400;font-family:'Liberation Sans',sans-serif;transform:scaleX(0.9697);">Auto Rebaixar</div><div class="t" style="left:1132.87px;top:37.89px;font-size:11px;line-height:11px;color:#111;font-weight:700;font-family:'Liberation Serif',sans-serif;transform:scaleX(1.3429);">AF</div>
<div class="a" style="left:0;top:0;width:1155px;height:836px;clip-path:inset(158px 1135px 25px 0)"><div class="t" style="left:13.16px;top:186.22px;font-size:12px;line-height:12px;color:#505050;font-weight:400;font-family:'Liberation Sans',sans-serif;transform:rotate(90deg) scaleX(0.9660);">Catálogos</div><div class="t" style="left:13.16px;top:268.28px;font-size:12px;line-height:12px;color:#505050;font-weight:400;font-family:'Liberation Sans',sans-serif;transform:rotate(90deg) scaleX(0.9257);">Itens Extras</div><div class="t" style="left:13.16px;top:353.91px;font-size:12px;line-height:12px;color:#505050;font-weight:400;font-family:'Liberation Sans',sans-serif;transform:rotate(90deg) scaleX(0.9935);">Inserção Automática</div><div class="t" style="left:13.16px;top:492.10px;font-size:12px;line-height:12px;color:#505050;font-weight:400;font-family:'Liberation Sans',sans-serif;transform:rotate(90deg) scaleX(0.9955);">Lista de Módulos</div><div class="t" style="left:13.16px;top:611.45px;font-size:12px;line-height:12px;color:#505050;font-weight:400;font-family:'Liberation Sans',sans-serif;transform:rotate(90deg) scaleX(0.9127);">Camadas</div><div class="t" style="left:13.16px;top:685.04px;font-size:12px;line-height:12px;color:#505050;font-weight:400;font-family:'Liberation Sans',sans-serif;transform:rotate(90deg) scaleX(1.1176);">Substituir</div><div class="t" style="left:12.86px;top:769.06px;font-size:12px;line-height:12px;color:#505050;font-weight:400;font-family:'Liberation Sans',sans-serif;transform:rotate(90deg) scaleX(1.0405);">Fila de Fabricação</div></div>
<div class="a" style="left:0;top:0;width:1155px;height:836px;clip-path:inset(158px 2px 25px 1138px)"><div class="t" style="left:1157.06px;top:186.44px;font-size:12px;line-height:12px;color:#505050;font-weight:400;font-family:'Liberation Sans',sans-serif;transform:rotate(90deg) scaleX(0.9550);">Ferramentas - Propriedades</div></div>
<svg style="left:0;top:0" width="1155" height="836" viewBox="0 0 1155 836">
<!-- title icon -->
<text x="6.6" y="8.2" font-family="Liberation Sans" font-weight="700" font-size="8.6" fill="#111" textLength="11.6" lengthAdjust="spacingAndGlyphs">PP+</text>
<path d="M5,12 Q5,10.6 7,10.6 L12,10.6 Q14,10 16,10 L20,10 Q21,10 21,12 L21,15 Q21,16 20,16 L6,16 Q5,16 5,15 Z" fill="#b3cce6"/>
<path d="M9.5,16 L11,12.5 L12.8,12.5 L12.8,16 Z" fill="#6a5aa8"/>
<!-- cursor -->
<path d="M96.6,303.2 L107.6,314.6 L103.8,315.3 L105.7,320 L103.4,321.3 L100.9,316.4 L96.7,319.6 Z" fill="#fff" stroke="#222" stroke-width="1" stroke-linejoin="round"/>
<!-- window controls -->
<g stroke="#7a7a7a" stroke-width="1" fill="none">
<path d="M1042,8.5 L1052.5,8.5"/>
<rect x="1087.5" y="3.5" width="9" height="9" rx="1.2"/>
<path d="M1133,3.5 L1143,13 M1143,3.5 L1133,13"/>
</g>
<!-- left tab icons -->
<rect x="1.8" y="167.6" width="11.2" height="12.6" rx="1.2" fill="#fff" stroke="#1d74e0" stroke-width="1.6"/>
<ellipse cx="6.5" cy="170.8" rx="2.6" ry="1.3" fill="#d8885a"/>
<ellipse cx="6.5" cy="176.8" rx="2.6" ry="1.3" fill="#d8885a"/>
<path d="M11,169 L11,179" stroke="#9cc8f0" stroke-width="1" stroke-dasharray="1.2,1"/>
<path d="M11,252.4 L3.6,252.4 Q1.8,252.4 1.8,255.3 Q1.8,258.3 3.6,258.3 L11.6,258.3 Q13.4,258.3 13.4,256.4 Q13.4,254.7 11.6,254.7 L4.6,254.7" fill="none" stroke="#555" stroke-width="1.1"/>
<g fill="none" stroke="#8a8a8a" stroke-width="1.2">
<circle cx="10.3" cy="339.8" r="3.2"/><circle cx="10.3" cy="339.8" r="1" stroke-width="0.9"/>
<path d="M10.3,335.4 L10.3,336 M10.3,343.6 L10.3,344.2 M6,339.8 L6.6,339.8 M14,339.8 L14.6,339.8 M7.2,336.7 L7.7,337.2 M12.9,342.4 L13.4,342.9 M13.4,336.7 L12.9,337.2 M7.7,342.4 L7.2,342.9" stroke-width="1.4"/>
<circle cx="4.3" cy="345.8" r="3"/><circle cx="4.3" cy="345.8" r="0.9" stroke-width="0.9"/>
<path d="M4.3,341.6 L4.3,342.2 M4.3,349.4 L4.3,350 M7.6,345.8 L8.2,345.8 M6.9,343 L7.4,342.5 M6.9,348.6 L7.4,349.1" stroke-width="1.4"/>
</g>
<rect x="2" y="475.6" width="11.6" height="10.8" fill="#fff" stroke="#8cbce8" stroke-width="1"/>
<ellipse cx="5" cy="478.6" rx="1.8" ry="1.4" fill="#a85838"/><ellipse cx="10" cy="478.6" rx="1.8" ry="1.4" fill="#a85838"/>
<path d="M4.6,482 L4.6,485 M9.5,482 L9.5,485" stroke="#4a90d8" stroke-width="1.2"/>
<g fill="#c8e2f6" stroke="#6aaae0" stroke-width="0.9">
<path d="M7.5,593.6 L13.8,600.2 L7.5,606.8 L1.2,600.2 Z" fill="#e2f0fa"/>
<path d="M4.8,593.6 L11.1,600.2 L4.8,606.8 L1,602.8 L1,597.6 Z"/>
<path d="M2.2,593.6 L8.5,600.2 L2.2,606.8 L1,605.5 L1,594.8 Z"/>
</g>
<rect x="1" y="670" width="7.7" height="6.6" rx="2.2" fill="#e8b088" stroke="#b87850" stroke-width="0.9"/>
<rect x="1" y="679.2" width="7.7" height="6.6" rx="2.2" fill="#e8b088" stroke="#b87850" stroke-width="0.9"/>
<path d="M4.5,671.5 L4.5,675 M6.5,671.5 L6.5,675 M6.5,680.5 L6.5,684" stroke="#f0e098" stroke-width="0.9"/>
<path d="M4.8,671.6 L4.8,675" stroke="#9a4a3a" stroke-width="1.2"/>
<path d="M11.8,673 Q14.5,676.5 12.8,681 M10.6,679.5 L10.8,682 L13.5,682" fill="none" stroke="#333" stroke-width="1.1"/>
<rect x="3" y="749.5" width="11" height="12" fill="#9a9a9a" stroke="#6a6a6a" stroke-width="0.8"/>
<circle cx="9" cy="753.5" r="2.2" fill="#333"/>
<rect x="1" y="756.5" width="6.5" height="6.5" fill="#1a6fd0"/>
<path d="M4.2,757.5 L4.2,762 M2,759.8 L6.5,759.8" stroke="#fff" stroke-width="1"/>
<!-- right tab icon -->
<path d="M1144,167 L1150,173" stroke="#d04040" stroke-width="2.6" stroke-linecap="round"/>
<path d="M1144,177 L1152,169" stroke="#5a8ad0" stroke-width="1.3" stroke-dasharray="1,0.6"/>
<!-- bottom tab bar icons -->
<circle cx="28.2" cy="802.6" r="1.9" fill="#1a6fd0"/>
<path d="M26.5,796 A7,7 0 0 1 34.6,804.2 M26.5,791.2 A11.6,11.6 0 0 1 39.2,804.2" fill="none" stroke="#1a6fd0" stroke-width="2.2"/>
<circle cx="109.2" cy="797.8" r="6.8" fill="#5ab4ea"/>
<path d="M102.8,797.8 L115.6,797.8 M109.2,791 L109.2,804.6 M104,794 L114.4,794 M104,801.6 L114.4,801.6" stroke="#c8e8fa" stroke-width="0.8" fill="none"/>
<path d="M189,794 L189,804.5 L202.5,804.5 L203.5,797.5 L195,797.5 L194,795.5 L192,794 Z" fill="#f4d6a0" stroke="#b08850" stroke-width="0.9"/>
<path d="M191,795 L197,791 L201,794" fill="none" stroke="#b0b0b0" stroke-width="0.8"/>
<g fill="#9a9a9a">
<rect x="1041.5" y="802" width="1.6" height="1.6"/><rect x="1044.5" y="802" width="1.6" height="1.6"/><rect x="1047.5" y="802" width="1.6" height="1.6"/>
<rect x="1044.5" y="799" width="1.6" height="1.6"/><rect x="1047.5" y="799" width="1.6" height="1.6"/><rect x="1047.5" y="796" width="1.6" height="1.6"/>
</g>
<path d="M1063.5,792 L1071,792 L1074,795 L1074,804 L1063.5,804 Z" fill="#fff" stroke="#5ab0e8" stroke-width="0.9"/>
<path d="M1064,799 L1069,796 L1075,799 L1075,804.5 L1069,806.5 L1064,804.5 Z" fill="#a0a0a8" stroke="#707078" stroke-width="0.8"/>
<path d="M1120,795 L1127,802 M1127,795 L1120,802" stroke="#9a9a9a" stroke-width="1.8"/>
<!-- status bar icons -->
<path d="M795,819 L796.5,819 L797.5,826 M797.5,823.5 Q801,820.5 802.5,823.5 Q801,827.5 797.5,826 M804,823 Q806,820 809,821.5 Q811,824 809,826.5 Q805,827.5 804.5,824.5 Q806.5,823.5 809,824" fill="none" stroke="#222" stroke-width="1.3"/>
<path d="M860,821 L865,821 L862.5,824 Z" fill="#333"/>
<rect x="877" y="815" width="3" height="14" fill="#e8e8e8" stroke="#9a9a9a" stroke-width="0.8"/>
<path d="M880.5,817 L886,817 L889,820 L889,829 L880.5,829 Z" fill="#b88868" stroke="#7a5038" stroke-width="0.8"/>
<path d="M886,820 L891,820 M886,823 L891,823 M886,826 L891,826" stroke="#555" stroke-width="0.9"/>
<rect x="947" y="814.5" width="7" height="7" fill="#b88868" stroke="#6a4028" stroke-width="0.7"/>
<rect x="956" y="814.5" width="7" height="7" fill="#b88868" stroke="#6a4028" stroke-width="0.7"/>
<rect x="947" y="823" width="7" height="7" fill="#b88868" stroke="#6a4028" stroke-width="0.7"/>
<rect x="956" y="823" width="7" height="7" fill="#b88868" stroke="#6a4028" stroke-width="0.7"/>
<path d="M951,822 L959,822 M955,818 L955,826" stroke="#e01818" stroke-width="2.4"/>
<path d="M1029.5,814 L1029.5,821" stroke="#e07040" stroke-width="1.6"/>
<path d="M1027,819 L1029.5,822 L1032,819 Z" fill="#e07040"/>
<rect x="1023" y="824" width="13" height="4" fill="#e8c898" stroke="#c09060" stroke-width="0.7"/>
<path d="M1132,823 L1140,831" stroke="#e09050" stroke-width="3" stroke-linecap="round"/>
<circle cx="1130" cy="820" r="3.2" fill="#d8d8d8" stroke="#a0a0a0" stroke-width="0.8"/>
<g fill="#9a9a9a"><rect x="1148" y="826" width="1.2" height="1.2"/><rect x="1145" y="829" width="1.2" height="1.2"/><rect x="1148" y="829" width="1.2" height="1.2"/></g>
</svg>

</body></html>
